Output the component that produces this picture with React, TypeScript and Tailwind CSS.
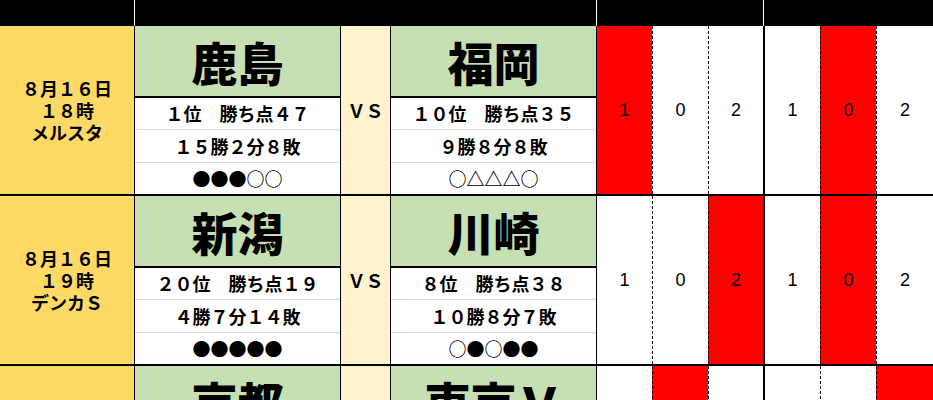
const JP = "font-['Noto_Sans_CJK_JP',sans-serif]";

interface Team {
  name: string;
  rank: string;
  record: string;
  form: string;
}

interface Match {
  date: string;
  time: string;
  venue: string;
  home: Team;
  away: Team;
  red: number[];
}

const matches: Match[] = [
  {
    date: "８月１６日",
    time: "１８時",
    venue: "メルスタ",
    home: { name: "鹿島", rank: "１位　勝ち点４７", record: "１５勝２分８敗", form: "●●●○○" },
    away: { name: "福岡", rank: "１０位　勝ち点３５", record: "９勝８分８敗", form: "○△△△○" },
    red: [0, 4],
  },
  {
    date: "８月１６日",
    time: "１９時",
    venue: "デンカＳ",
    home: { name: "新潟", rank: "２０位　勝ち点１９", record: "４勝７分１４敗", form: "●●●●●" },
    away: { name: "川崎", rank: "８位　勝ち点３８", record: "１０勝８分７敗", form: "○●○●●" },
    red: [2, 4],
  },
  {
    date: "８月１６日",
    time: "１９時",
    venue: "サンガＳ",
    home: { name: "京都", rank: "１７位　勝ち点２３", record: "５勝８分１２敗", form: "○●△●○" },
    away: { name: "東京Ｖ", rank: "９位　勝ち点３４", record: "８勝１０分７敗", form: "△○○●△" },
    red: [1, 5],
  },
];

const scores = ["1", "0", "2", "1", "0", "2"];
const scoreCols = [
  "w-[56px] border-l border-solid border-black",
  "w-[56px] border-l border-dashed border-black",
  "w-[55px] border-l border-dashed border-black",
  "w-[57px] border-l-2 border-solid border-black",
  "w-[56px] border-l border-dashed border-black",
  "flex-1 border-l border-dashed border-black",
];

function TeamCell({ team }: { team: Team }) {
  return (
    <div className={`w-[206px] border-l border-black flex flex-col ${JP}`}>
      <div className="h-[72px] bg-[#C6E0B4] border-b-2 border-black flex items-center justify-center text-[46px] font-black leading-none">
        {team.name}
      </div>
      <div className="h-[32px] bg-white border-b border-[#D9D9D9] flex items-center justify-center text-[18px] font-bold">
        {team.rank}
      </div>
      <div className="h-[33px] bg-white border-b border-[#D9D9D9] flex items-center justify-center text-[18px] font-bold">
        {team.record}
      </div>
      <div className="flex-1 bg-white flex items-center justify-center text-[18px] font-bold">
        {team.form}
      </div>
    </div>
  );
}

function MatchRow({ match }: { match: Match }) {
  return (
    <div className="flex h-[170px] border-b-2 border-black">
      <div
        className={`w-[134px] bg-[#FFD966] flex flex-col items-center justify-center text-[18px] font-bold leading-[22px] ${JP}`}
      >
        <div>{match.date}</div>
        <div>{match.time}</div>
        <div>{match.venue}</div>
      </div>
      <TeamCell team={match.home} />
      <div
        className={`w-[50px] border-l border-black bg-[#FFF2CC] flex items-center justify-center text-[18px] font-bold ${JP}`}
      >
        ＶＳ
      </div>
      <TeamCell team={match.away} />
      {scores.map((s, i) => (
        <div
          key={i}
          className={`${scoreCols[i]} ${
            match.red.includes(i) ? "bg-[#FF0000]" : "bg-white"
          } flex items-center justify-center text-[18px] font-['Liberation_Sans',sans-serif]`}
        >
          {s}
        </div>
      ))}
    </div>
  );
}

export default function App() {
  return (
    <div className="w-[933px] bg-white text-black overflow-hidden">
      <div className="flex h-[26px] bg-black">
        <div className="w-[134px]" />
        <div className="w-[462px] border-l border-white" />
        <div className="w-[167px] border-l border-white" />
        <div className="flex-1 border-l border-white" />
      </div>
      {matches.map((m) => (
        <MatchRow key={m.home.name} match={m} />
      ))}
    </div>
  );
}
